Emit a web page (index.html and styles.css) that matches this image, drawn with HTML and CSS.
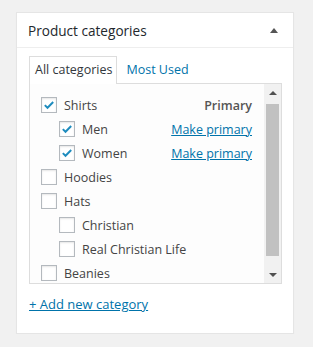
FILE: index.html
```html
<!DOCTYPE html>
<html lang="en">
<head>
  <meta charset="UTF-8" />
  <title>Product categories</title>
  <link rel="stylesheet" href="styles.css">
</head>
<body>

  <!-- Product categories box -->
  <div class="postbox">
    <div class="postbox-header">
      <h2>Product categories</h2>
      <span class="toggle-arrow"></span>
    </div>

    <div class="inside">
      <ul class="category-tabs">
        <li class="tab active">All categories</li>
        <li class="tab"><a href="#">Most Used</a></li>
      </ul>

      <div class="tabs-panel">
        <ul class="category-list">
          <li class="cat-row">
            <span class="check checked"><svg viewBox="0 0 16 16"><path d="M3.2 8.2 L6.3 11.2 L12.8 4.6" /></svg></span>
            <span class="cat-name">Shirts</span>
            <span class="primary-label">Primary</span>
          </li>
          <li class="cat-row child">
            <span class="check checked"><svg viewBox="0 0 16 16"><path d="M3.2 8.2 L6.3 11.2 L12.8 4.6" /></svg></span>
            <span class="cat-name">Men</span>
            <a href="#" class="make-primary">Make primary</a>
          </li>
          <li class="cat-row child">
            <span class="check checked"><svg viewBox="0 0 16 16"><path d="M3.2 8.2 L6.3 11.2 L12.8 4.6" /></svg></span>
            <span class="cat-name">Women</span>
            <a href="#" class="make-primary">Make primary</a>
          </li>
          <li class="cat-row">
            <span class="check"></span>
            <span class="cat-name">Hoodies</span>
          </li>
          <li class="cat-row">
            <span class="check"></span>
            <span class="cat-name">Hats</span>
          </li>
          <li class="cat-row child">
            <span class="check"></span>
            <span class="cat-name">Christian</span>
          </li>
          <li class="cat-row child">
            <span class="check"></span>
            <span class="cat-name">Real Christian Life</span>
          </li>
          <li class="cat-row">
            <span class="check"></span>
            <span class="cat-name">Beanies</span>
          </li>
        </ul>

        <!-- fake scrollbar -->
        <div class="scrollbar">
          <div class="scroll-btn up"></div>
          <div class="scroll-track"><div class="scroll-thumb"></div></div>
          <div class="scroll-btn down"></div>
        </div>
      </div>

      <a href="#" class="add-new">+ Add new category</a>
    </div>
  </div>

</body>
</html>
```

FILE: styles.css
```css
body {
  margin: 0;
  padding: 12px 0 0 16px;
  background-color: #f1f1f1;
  font-family: 'Open Sans', 'Noto Sans', sans-serif;
  font-size: 12.5px;
  color: #444;
}

.postbox {
  width: 276px;
  height: 320px;
  background-color: #fff;
  border: 1px solid #e5e5e5;
  box-shadow: 0 1px 1px rgba(0, 0, 0, 0.04);
}

.postbox-header {
  display: flex;
  align-items: center;
  justify-content: space-between;
  height: 34px;
  padding: 0 15px 0 11px;
  border-bottom: 1px solid #eee;
}

.postbox-header h2 {
  margin: 0;
  font-size: 13.6px;
  font-weight: 400;
  color: #23282d;
}

.toggle-arrow {
  width: 0;
  height: 0;
  border-left: 4px solid transparent;
  border-right: 4px solid transparent;
  border-bottom: 5px solid #555;
  margin-top: 1px;
}

.inside {
  padding: 8px 0 0 12px;
}

/* Tabs */
.category-tabs {
  display: flex;
  margin: 0;
  padding: 0;
  list-style: none;
}

.tab {
  padding: 4px 4px 5px 5px;
  margin-right: 3px;
  line-height: 17px;
  border: 1px solid transparent;
  border-bottom: none;
}

.tab.active {
  border-color: #ddd;
  background-color: #fff;
  color: #32373c;
  position: relative;
  margin-bottom: -1px;
  z-index: 1;
}

.tab a {
  color: #0073aa;
  text-decoration: none;
}

/* List box */
.tabs-panel {
  display: flex;
  width: 251px;
  height: 199px;
  border: 1px solid #ddd;
  background-color: #fdfdfd;
  overflow: hidden;
}

.category-list {
  flex: 1;
  margin: 0;
  padding: 9px 12px 0 11px;
  list-style: none;
}

.cat-row {
  display: flex;
  align-items: center;
  height: 24px;
}

.cat-row.child {
  padding-left: 18px;
}

.check {
  flex: none;
  width: 14px;
  height: 14px;
  border: 1px solid #b4b9be;
  background-color: #fff;
  box-shadow: inset 0 1px 2px rgba(0, 0, 0, 0.1);
  margin-right: 7px;
}

.check svg {
  display: block;
  width: 14px;
  height: 14px;
  fill: none;
  stroke: #1e8cbe;
  stroke-width: 2.2;
}

.cat-name {
  flex: 1;
  color: #444;
}

.primary-label {
  font-weight: 600;
  color: #555;
}

.make-primary {
  color: #0073aa;
  text-decoration: underline;
}

/* Scrollbar */
.scrollbar {
  flex: none;
  display: flex;
  flex-direction: column;
  width: 17px;
  background-color: #f1f1f1;
}

.scroll-btn {
  height: 17px;
  display: flex;
  align-items: center;
  justify-content: center;
}

.scroll-btn::before {
  content: "";
  width: 0;
  height: 0;
  border-left: 4px solid transparent;
  border-right: 4px solid transparent;
}

.scroll-btn.up::before {
  border-bottom: 4px solid #505050;
}

.scroll-btn.down::before {
  border-top: 4px solid #505050;
}

.scroll-track {
  flex: 1;
  padding: 3px 2px 10px 2px;
}

.scroll-thumb {
  height: 100%;
  background-color: #c1c1c1;
}

.add-new {
  display: inline-block;
  margin-top: 11px;
  color: #0073aa;
  font-size: 13px;
  text-decoration: underline;
}
```
